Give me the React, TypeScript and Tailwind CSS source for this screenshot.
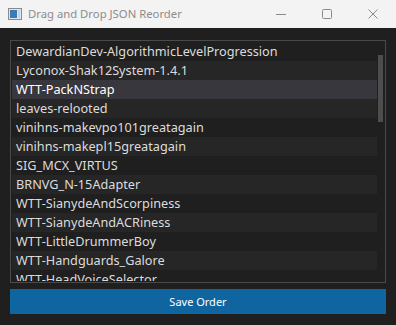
import React from "react";

const items = [
  "DewardianDev-AlgorithmicLevelProgression",
  "Lyconox-Shak12System-1.4.1",
  "WTT-PackNStrap",
  "leaves-relooted",
  "vinihns-makevpo101greatagain",
  "vinihns-makepl15greatagain",
  "SIG_MCX_VIRTUS",
  "BRNVG_N-15Adapter",
  "WTT-SianydeAndScorpiness",
  "WTT-SianydeAndACRiness",
  "WTT-LittleDrummerBoy",
  "WTT-Handguards_Galore",
  "WTT-HeadVoiceSelector",
];

export default function App() {
  return (
    <div
      className="w-[396px] h-[325px] flex flex-col bg-[#1f1f1f] overflow-hidden"
      style={{ fontFamily: '"Noto Sans", "Open Sans", sans-serif' }}
    >
      {/* Title bar */}
      <div className="h-[28px] bg-[#f3f3f3] flex items-center shrink-0">
        <div className="ml-[8px] w-[14px] h-[12px] border border-[#8a8a8a] bg-[#dfe6ee] flex items-stretch p-[1px] gap-[1px]">
          <div className="w-[7px] bg-[#3d7ab8]" />
          <div className="flex-1 bg-[#c4d4e4]" />
        </div>
        <div className="ml-[6px] text-[11.3px] text-[#8c8c8c] leading-none">Drag and Drop JSON Reorder</div>
        <div className="ml-auto flex items-center">
          <div className="w-[46px] h-[28px] flex items-center justify-center">
            <svg width="10" height="10" viewBox="0 0 10 10">
              <path d="M0 5.5 H10" stroke="#8a8a8a" strokeWidth="1" />
            </svg>
          </div>
          <div className="w-[46px] h-[28px] flex items-center justify-center">
            <svg width="10" height="10" viewBox="0 0 10 10">
              <rect x="0.5" y="0.5" width="9" height="9" rx="1" fill="none" stroke="#8a8a8a" strokeWidth="1" />
            </svg>
          </div>
          <div className="w-[46px] h-[28px] flex items-center justify-center">
            <svg width="10" height="10" viewBox="0 0 10 10">
              <path d="M0.5 0.5 L9.5 9.5 M9.5 0.5 L0.5 9.5" stroke="#8a8a8a" strokeWidth="1" />
            </svg>
          </div>
        </div>
      </div>

      {/* Body */}
      <div className="flex-1 flex flex-col px-[10px] pt-[12px]">
        <div className="h-[243px] border border-[#4a4a4a] flex p-[1px] overflow-hidden">
          <div className="w-[365px] flex flex-col overflow-hidden">
            {items.map((t, i) => {
              const selected = i === 2;
              const bg = selected ? "bg-[#37373d]" : i % 2 === 1 ? "bg-[#262626]" : "bg-[#1f1f1f]";
              return (
                <div
                  key={t}
                  className={`h-[19px] shrink-0 flex items-center pl-[4px] text-[12.7px] leading-none whitespace-nowrap ${bg} ${selected ? "text-white" : "text-[#dcdcdc]"}`}
                >
                  {t}
                </div>
              );
            })}
          </div>
          <div className="pl-[1px] pt-[13px]">
            <div className="w-[5px] h-[67px] bg-[#4d4d4d]" />
          </div>
        </div>
        <div className="mt-[6px] h-[25px] bg-[#0e65a0] flex items-center justify-center text-[11px] text-white leading-none">
          Save Order
        </div>
      </div>
    </div>
  );
}
